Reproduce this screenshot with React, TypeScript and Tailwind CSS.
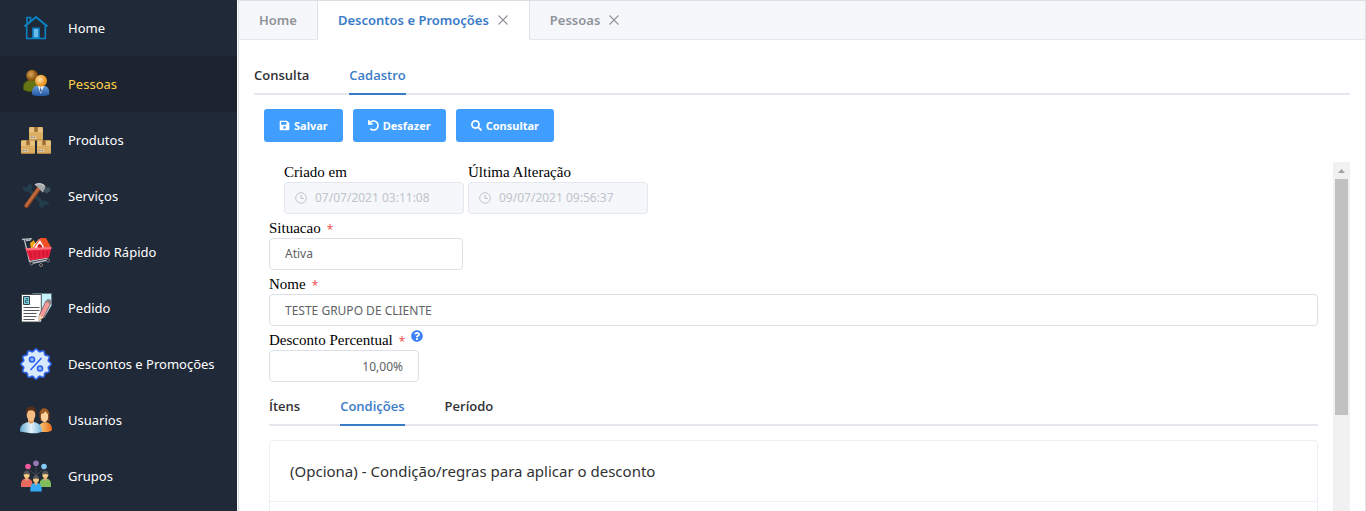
import { useState } from "react";
import type { ReactNode } from "react";
import { FaSave, FaUndo, FaSearch, FaQuestionCircle } from "react-icons/fa";

const HomeIcon = () => (
  <svg viewBox="0 0 32 32" className="size-8" fill="none" stroke="#0a84c6" strokeWidth="1.6">
    <path d="M4.500 14.500 16 5l11.500 9.500" strokeWidth="2" />
    <path d="M6.700 14v12.500h18.600V14M7 12V5.500h3.500V9" />
    <path d="M13 26V16.300h6V26z" fill="#6db9e8" />
  </svg>
);

const PeopleIcon = () => (
  <svg viewBox="0 0 32 32" className="size-8">
    <defs>
      <radialGradient id="pBrown" cx="0.4" cy="0.4"><stop offset="0" stopColor="#dba658" /><stop offset="1" stopColor="#8a5310" /></radialGradient>
      <radialGradient id="pGold" cx="0.4" cy="0.4"><stop offset="0" stopColor="#ffe3b0" /><stop offset="1" stopColor="#e8941c" /></radialGradient>
      <linearGradient id="pBlue" x2="0" y2="1"><stop offset="0" stopColor="#6da0da" /><stop offset="1" stopColor="#2457a5" /></linearGradient>
    </defs>
    <path d="M3.500 21.500c-.8-7 3-9.500 8.500-9.500s8 3 7.500 9c-3 3-13 3.500-16 .5z" fill="#657515" stroke="#46540b" strokeWidth=".7" />
    <circle cx="12" cy="7.500" r="5.800" fill="url(#pBrown)" />
    <path d="M12 26.500c-.5-6 2-9.500 8.500-9.500s9.500 3.500 8.700 9.500c-2 2-15 2-17.200 0z" fill="url(#pBlue)" />
    <path d="m18 18 2.600 8 3.400-8z" fill="#f5f8fc" />
    <path d="m20.700 18.500-.8 4 .8 2.500 1-2.500z" fill="#315f9d" />
    <circle cx="21" cy="12.700" r="6" fill="url(#pGold)" />
  </svg>
);

const Box = ({ x, y }: { x: number; y: number }) => (
  <g transform={`translate(${x} ${y})`}>
    <rect width="14" height="13.500" rx="1" fill="#dcae62" />
    <path d="M.7.5h12.600l.7 5H0z" fill="#e7c27f" />
    <path d="M5.300 0h3.400v5.500l-1.700-1-1.700 1z" fill="#9b6b31" />
    <path d="M1.500 9h5.500v2.800H1.500z" fill="#ead9bd" />
    <path d="M2.300 9.500v1.600M4 9.500v1.600M5.700 9.500v1.600" stroke="#6e604d" strokeWidth=".8" />
    <path d="M.4 13h13.200" stroke="#ad7c36" strokeWidth=".7" />
  </g>
);

const BoxesIcon = () => (
  <svg viewBox="0 0 32 32" className="size-8"><Box x={9} y={3} /><Box x={1} y={16.3} /><Box x={17} y={16.3} /></svg>
);

const ToolsIcon = () => (
  <svg viewBox="0 0 32 32" className="size-8">
    <path d="M2.500 5.500 5 7.500l3-1 .5-3C12 4 13 7 11.500 10L23 21c3-1 6 1 6 5l-2.500-1.500-3 1-.5 3c-3.500-.5-4.500-3-3.500-6L8.500 12c-3.500.8-6-2-6-6.500z" fill="#243d4d" />
    <path d="M19 8.500 6.500 26" stroke="#7c3e20" strokeWidth="4.600" strokeLinecap="round" />
    <path d="M18.500 8.500 6.200 25.500" stroke="#bd6638" strokeWidth="3" strokeLinecap="round" />
    <path d="M14.500 4.500c4-1.800 8-1.700 10.500 1l1 3.500-3.500 3.500-4-4.500z" fill="#a6a8aa" />
    <path d="M15 4.500c4-1.300 7-1 9.500 1.500" stroke="#d6d7d8" fill="none" />
    <path d="m25.500 7 4.500.5.300 4-4 2-2.800-2.500z" fill="#3d525f" />
  </svg>
);

const CartIcon = () => (
  <svg viewBox="0 0 32 32" className="size-8">
    <path d="m2 3.500 9-.8-1 1.500-4 .5M4.500 4l5 21.500 18-3.500M11 27.500l17-3.500" fill="none" stroke="#b9bec4" strokeWidth="1.300" />
    <path d="m10 7 4-3 3 9h-6z" fill="#f0a719" />
    <path d="m13 10 6-7h6l4 8-3 3H14z" fill="#fff" />
    <path d="M20 2h6l5 9-5 2-4-7z" fill="#f05022" />
    <path d="m13.500 12 6.500-9 5.500 9.500" fill="none" stroke="#f05022" strokeWidth="1.200" />
    <path d="M17.500 13v-3q2-4 4.500 0v3z" fill="#c91818" />
    <path d="m5.500 12.500 26-1-2.500 10-19 3z" fill="#e81f3d" />
    <path d="m5.500 12 26-1-.4 2.200-25 1.300z" fill="#ff7180" />
    <path d="m10 16 1.500 6m3-6.500.8 6m3.700-6.500v6m4.500-6.500-.3 6m4.300-6-.8 5.500" stroke="#b80f2b" strokeWidth=".8" />
    <circle cx="11.500" cy="27.500" r="1.500" fill="#1a1b20" stroke="#999" strokeWidth=".8" /><circle cx="21" cy="29" r="1.500" fill="#1a1b20" stroke="#999" strokeWidth=".8" /><circle cx="28" cy="24.500" r="1.500" fill="#1a1b20" stroke="#999" strokeWidth=".8" />
  </svg>
);

const OrderIcon = () => (
  <svg viewBox="0 0 32 32" className="size-8">
    <path d="M12.500 1.500h19v12L24 26z" fill="#c8f2fb" stroke="#54717c" strokeWidth=".6" />
    <path d="M1.500 2.500h19.800v27.500H1.500z" fill="#fff" stroke="#3f4245" strokeWidth=".9" />
    <path d="M3.500 4.500H9.500v8h-6z" fill="#77cadb" stroke="#31444b" />
    <path d="M5.500 6.500h2v2h-2v2h2" fill="none" stroke="#294c57" strokeWidth=".8" />
    <path d="M3.500 15.500h16M3.500 18.500h16M3.500 21.500h13M3.500 24.500h13M3.500 27.500h11" stroke="#55585b" strokeWidth="1.200" />
    <path d="m26 9 4.500 2.500-7 14-4.500 3 .3-5.500z" fill="#f29c9a" stroke="#6d4746" strokeWidth=".7" />
    <path d="m26 9 1.500-2q4.500 0 4 4l-1 1z" fill="#8d8688" /><path d="m19.300 23 4.200 2.500-4.500 3z" fill="#f4d5a7" />
  </svg>
);

const badgePoints = Array.from({ length: 96 }, (_, i) => {
  const a = (i / 96) * Math.PI * 2;
  const r = 13.9 + Math.cos(a * 12) * 1.2;
  return `${16 + r * Math.sin(a)},${16 - r * Math.cos(a)}`;
}).join(" ");

const DiscountIcon = () => (
  <svg viewBox="0 0 32 32" className="size-8" stroke="#2f62ee" strokeWidth="1.600">
    <polygon points={badgePoints} fill="#d8e8fd" strokeLinejoin="round" />
    <path d="m21.500 10-11 12" />
    <circle cx="12" cy="11.500" r="2.500" fill="#8fb6ff" /><circle cx="20" cy="20.500" r="2.500" fill="#8fb6ff" />
  </svg>
);

const UsersIcon = () => (
  <svg viewBox="0 0 32 32" className="size-8">
    <defs>
      <linearGradient id="uBlue"><stop stopColor="#62a7d0" /><stop offset=".5" stopColor="#e4f3fa" /><stop offset="1" stopColor="#75b4dc" /></linearGradient>
      <linearGradient id="uOrange"><stop stopColor="#ffd27d" /><stop offset="1" stopColor="#e66e1b" /></linearGradient>
    </defs>
    <path d="M18.500 27.500q-1-9 7-9.500 6.500.5 6.500 8-2 3-13.500 1.500z" fill="url(#uOrange)" />
    <path d="M19.500 12q-1-7.500 5-8 6 1 5 13h-9.500z" fill="#754020" />
    <ellipse cx="24.500" cy="12.500" rx="3.700" ry="5.500" fill="#ffd29c" /><path d="M20.500 10q4 0 5-3.500 1 3.500 4 4-1-6-5-6-4.500 0-4 5.500z" fill="#a15d25" />
    <path d="M0 27.500q-.5-9 11-10 11.500 1 11 10-5 3.500-22 0z" fill="url(#uBlue)" />
    <path d="M8 14h6v4q-3 3-6 0z" fill="#dfa064" />
    <ellipse cx="11" cy="11" rx="4.300" ry="6" fill="#f5bd82" />
    <path d="M6.200 10Q5 2.500 11.500 2.500q5.500 1 4.200 7.500l-1-2.500q-3-2-7-.5l-.7 3.500z" fill="#593017" />
  </svg>
);

const Person = ({ x, y, color }: { x: number; y: number; color: string }) => (
  <g transform={`translate(${x} ${y})`}>
    <path d="M-5.700 16v-3.500q.5-5 5.700-5t5.700 5V16z" fill={color} />
    <path d="M-1.500 6h3v2.500L0 10l-1.500-1.500z" fill="#e5a978" />
    <circle cy="4" r="3" fill="#f6c983" /><path d="M-3.200 4Q-3-.5 0-.5T3.200 4Q2 3 0 3T-3.200 4z" fill="#595959" />
  </g>
);

const GroupsIcon = () => (
  <svg viewBox="0 0 32 32" className="size-8">
    <path d="M8 7v2l8 6 8-6V7M16 5v10" fill="none" stroke="#50545a" strokeWidth=".7" />
    <circle cx="8" cy="6.500" r="2.800" fill="#ef5a9d" /><circle cx="16" cy="3.300" r="2.800" fill="#9778b5" /><circle cx="24" cy="6.500" r="2.800" fill="#83c8f8" />
    <Person x={6.700} y={11} color="#e96b5f" /><Person x={25.300} y={11} color="#82bd5b" /><Person x={16} y={15.500} color="#36a9f4" />
  </svg>
);

const menu: { label: string; icon: ReactNode }[] = [
  { label: "Home", icon: <HomeIcon /> },
  { label: "Pessoas", icon: <PeopleIcon /> },
  { label: "Produtos", icon: <BoxesIcon /> },
  { label: "Serviços", icon: <ToolsIcon /> },
  { label: "Pedido Rápido", icon: <CartIcon /> },
  { label: "Pedido", icon: <OrderIcon /> },
  { label: "Descontos e Promoções", icon: <DiscountIcon /> },
  { label: "Usuarios", icon: <UsersIcon /> },
  { label: "Grupos", icon: <GroupsIcon /> },
];

const CloseIcon = () => (
  <svg viewBox="0 0 12 12" className="size-3" fill="none" stroke="currentColor" strokeWidth="1.100"><path d="m1.500 1.500 9 9m0-9-9 9" /></svg>
);

const ClockIcon = () => (
  <svg viewBox="0 0 12 12" className="size-3 shrink-0" fill="none" stroke="currentColor"><circle cx="6" cy="6" r="5.300" /><path d="M6 2.800v3.700h3" /></svg>
);

function LineTabs({ items, initial }: { items: string[]; initial: string }) {
  const [active, setActive] = useState(initial);
  return (
    <div role="tablist" className="flex h-10 gap-10 font-['Open_Sans',sans-serif] text-[13px] leading-10 font-semibold shadow-[inset_0_-2px_0_#e4e7ed]">
      {items.map((t) => (
        <button
          key={t}
          role="tab"
          aria-selected={t === active}
          onClick={() => setActive(t)}
          className={t === active ? "h-10 text-[#3a7bc8] shadow-[inset_0_-2px_0_#3a7bc8]" : "h-10 text-[#303133]"}
        >
          {t}
        </button>
      ))}
    </div>
  );
}

function FieldLabel({ id, text, required }: { id: string; text: string; required?: boolean }) {
  return (
    <label htmlFor={id} className="font-['Liberation_Serif',serif] text-[15px] leading-5 text-black">
      {text}
      {required && <span className="ml-1.5 align-middle font-['Open_Sans',sans-serif] text-[12px] leading-none text-[#f04848]">*</span>}
    </label>
  );
}

function DateField({ id, label, value }: { id: string; label: string; value: string }) {
  return (
    <div className="flex w-45 flex-col">
      <FieldLabel id={id} text={label} />
      <div className="flex h-8 items-center gap-2 rounded border border-[#e4e7ed] bg-[#f5f7fa] px-2.5 text-[#c0c4cc]">
        <ClockIcon />
        <input id={id} disabled defaultValue={value} className="w-full min-w-0 text-[12px] leading-5" />
      </div>
    </div>
  );
}

const field = "h-8 rounded border border-[#dcdfe6] bg-white px-[15px] text-[12px] text-[#606266] outline-none";
const action = "flex h-[33px] items-center justify-center gap-1 rounded-[3px] bg-[#409eff] px-[15px] text-[11px] leading-4 font-bold text-white";

export default function App() {
  return (
    <div className="flex h-screen overflow-hidden bg-white font-['Noto_Sans',sans-serif]">
      <nav className="w-[237px] shrink-0 overflow-hidden bg-[#202938]">
        {menu.map(({ label, icon }) => (
          <a
            key={label}
            href="#"
            className={
              label === "Pessoas"
                ? "flex h-14 items-center gap-4 bg-[#1d2430] px-5 text-[13px] leading-[22px] text-[#ffd04b]"
                : "flex h-14 items-center gap-4 px-5 text-[13px] leading-[22px] text-white"
            }
          >
            <span className="shrink-0">{icon}</span>
            <span className="whitespace-nowrap">{label}</span>
          </a>
        ))}
      </nav>

      <main className="ml-px flex min-w-0 flex-1 flex-col border border-b-0 border-[#dcdfe6]">
        <div role="tablist" className="flex h-[39px] shrink-0 bg-[#f5f7fa] text-[13px] leading-[38px] font-semibold text-[#909399]">
          <button role="tab" aria-selected="false" className="flex items-center border-b border-[#e4e7ed] px-5">Home</button>
          <button role="tab" aria-selected="true" className="flex items-center gap-2 border-x border-b border-[#dcdfe6] border-b-white bg-white px-5 text-[#3a7bc8]">
            Descontos e Promoções
            <span className="text-[#909399]"><CloseIcon /></span>
          </button>
          <button role="tab" aria-selected="false" className="flex items-center gap-2 border-b border-[#e4e7ed] pl-5">
            Pessoas
            <CloseIcon />
          </button>
          <div className="flex-1 border-b border-[#e4e7ed]" />
        </div>

        <div className="flex min-h-0 flex-1 flex-col px-[15px] pt-[15px]">
          <LineTabs items={["Consulta", "Cadastro"]} initial="Cadastro" />

          <div className="mt-3.5 flex shrink-0 gap-2.5 px-2.5">
            <button className={action}><FaSave />Salvar</button>
            <button className={action}><FaUndo />Desfazer</button>
            <button className={action}><FaSearch />Consultar</button>
          </div>

          <div className="mt-5 flex min-h-0 flex-1">
            <form className="flex min-w-0 flex-1 flex-col overflow-hidden px-[15px]">
              <div className="flex shrink-0 gap-1 px-[15px]">
                <DateField id="criado" label="Criado em" value="07/07/2021 03:11:08" />
                <DateField id="alteracao" label="Última Alteração" value="09/07/2021 09:56:37" />
              </div>

              <div className="mt-1 flex shrink-0 flex-col">
                <FieldLabel id="situacao" text="Situacao" required />
                <select id="situacao" className={`${field} w-[194px] appearance-none`}>
                  <option>Ativa</option>
                </select>
              </div>

              <div className="mt-1 flex shrink-0 flex-col">
                <FieldLabel id="nome" text="Nome" required />
                <input id="nome" defaultValue="TESTE GRUPO DE CLIENTE" className={field} />
              </div>

              <div className="mt-1 flex shrink-0 flex-col">
                <div className="flex h-5 gap-1.5">
                  <FieldLabel id="desconto" text="Desconto Percentual" required />
                  <FaQuestionCircle className="size-3 text-[#3b82f6]" />
                </div>
                <input id="desconto" defaultValue="10,00%" className={`${field} w-[150px] text-right`} />
              </div>

              <div className="mt-1 shrink-0">
                <LineTabs items={["Ítens", "Condições", "Período"]} initial="Condições" />
              </div>

              <section className="mt-3.5 h-40 shrink-0 rounded border border-[#ebeef5]">
                <h2 className="border-b border-[#ebeef5] px-5 text-[15px] leading-[60px] text-[#303133]">
                  (Opciona) - Condição/regras para aplicar o desconto
                </h2>
              </section>
            </form>

            <div aria-hidden="true" className="flex w-[17px] shrink-0 flex-col items-center bg-[#f1f1f1]">
              <div className="flex h-[17px] shrink-0 items-center">
                <svg viewBox="0 0 7 4" className="h-1 w-[7px]" fill="#a3a3a3"><path d="M3.500 0 7 4H0z" /></svg>
              </div>
              <div className="h-[236px] w-[13px] shrink-0 bg-[#c1c1c1]" />
            </div>
          </div>
        </div>
      </main>
    </div>
  );
}
